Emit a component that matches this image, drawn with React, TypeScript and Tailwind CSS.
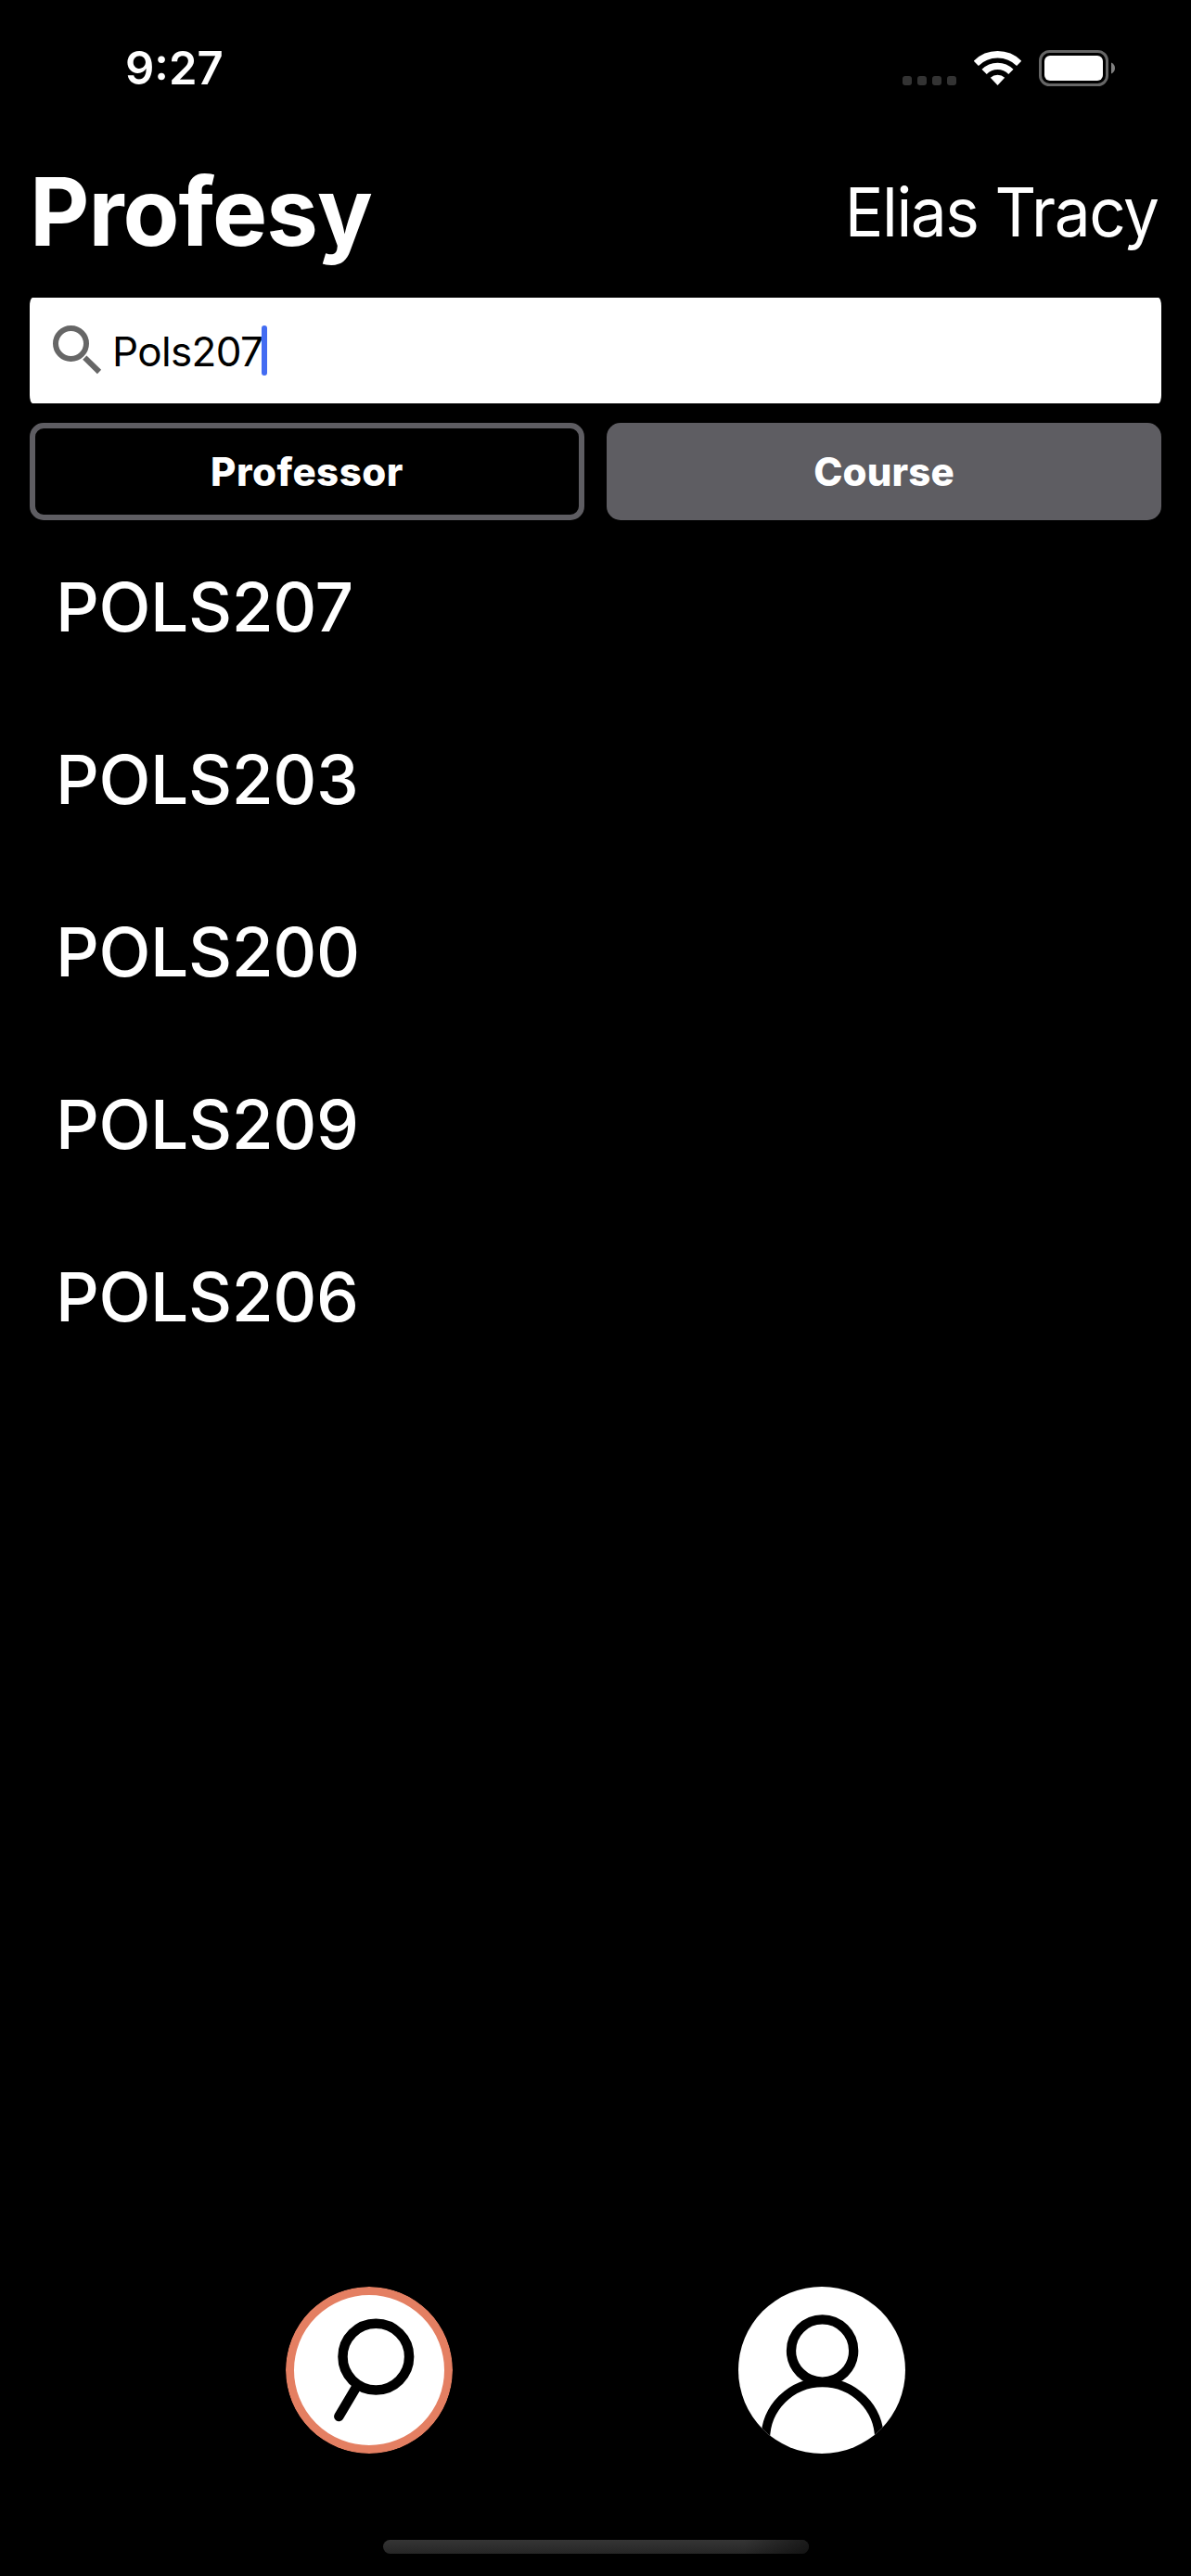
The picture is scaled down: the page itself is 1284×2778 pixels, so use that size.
const courses = ['POLS207', 'POLS203', 'POLS200', 'POLS209', 'POLS206']

function WifiIcon() {
  return (
    <svg className="h-[37px] w-[51px]" viewBox="0 0 51 37" fill="none">
      <path d="M2.3 13.4A32.8 32.8 0 0 1 48.7 13.4" stroke="white" strokeWidth="7.4" />
      <path d="M11.1 22.4A20.2 20.2 0 0 1 39.9 22.4" stroke="white" strokeWidth="7.4" />
      <path d="M25.5 37L17.8 28.8A11.4 11.4 0 0 1 33.2 28.8Z" fill="white" />
    </svg>
  )
}

function BatteryIcon() {
  return (
    <svg className="h-[39px] w-[82px]" viewBox="0 0 82 39" fill="none">
      <rect x="1.5" y="1.5" width="72" height="36" rx="10" stroke="#666666" strokeWidth="3" />
      <rect x="6" y="6" width="63" height="27" rx="6" fill="white" />
      <path d="M78 13.5C80.6 14.6 82 16.8 82 19.5S80.6 24.4 78 25.5Z" fill="#808080" />
    </svg>
  )
}

function StatusBar() {
  return (
    <div className="flex h-[146px] shrink-0 items-center justify-between pr-[82px] pl-[135px]">
      <span className="text-[49px] leading-none font-semibold">9:27</span>
      <div className="flex items-end gap-[19px]">
        <div className="mb-px flex gap-1.5">
          {[0, 1, 2, 3].map((dot) => (
            <span key={dot} className="size-[10px] rounded-[3px] bg-[#333333]" />
          ))}
        </div>
        <div className="mb-px flex">
          <WifiIcon />
        </div>
        <BatteryIcon />
      </div>
    </div>
  )
}

function SearchField() {
  return (
    <div className="flex h-[114px] items-center rounded-[3px/9px] bg-white pl-[25px] text-black">
      <svg className="mb-px h-[53px] w-[53px]" viewBox="0 0 53 53" fill="none" stroke="#666666" strokeWidth="6">
        <circle cx="19.5" cy="19.5" r="16.5" />
        <path d="M34.3 34.6L50 50" />
      </svg>
      <span className="mt-px ml-[11px] text-[44px] leading-none tracking-[-0.65px]">Pols207</span>
      <span className="-ml-px h-[54px] w-[6px] rounded-full bg-[#436cf2]" />
    </div>
  )
}

function SearchTab() {
  return (
    <button className="size-[180px] overflow-hidden rounded-full" aria-label="Search">
      <svg className="size-full" viewBox="0 0 180 180" fill="none">
        <circle cx="90" cy="90" r="85.5" fill="white" stroke="#e47f62" strokeWidth="9" />
        <circle cx="97.3" cy="75.6" r="35.8" stroke="black" strokeWidth="10.5" />
        <path d="M75.7 109L57.3 140" stroke="black" strokeWidth="10.5" strokeLinecap="round" />
      </svg>
    </button>
  )
}

function ProfileTab() {
  return (
    <button className="size-[180px] overflow-hidden rounded-full bg-white" aria-label="Profile">
      <svg className="size-full" viewBox="0 0 180 180" fill="none" stroke="black">
        <circle cx="90.6" cy="69" r="33.6" strokeWidth="10.3" />
        <circle cx="90.6" cy="164.7" r="61.4" strokeWidth="9.8" />
      </svg>
    </button>
  )
}

export default function App() {
  return (
    <div className="flex h-[2778px] w-[1284px] flex-col overflow-hidden bg-black font-['Inter',sans-serif] text-white">
      <StatusBar />
      <div className="flex flex-col px-8">
        <header className="mb-[11px] flex h-[164px] items-center justify-between">
          <h1 className="origin-left scale-x-[0.975] text-[102px] leading-none font-bold tracking-[-1px]">Profesy</h1>
          <span className="mt-px mr-[3px] origin-right scale-x-[0.95] text-[73px] leading-none tracking-[-1.5px]">Elias Tracy</span>
        </header>
        <SearchField />
        <div className="mt-[21px] grid h-[105px] grid-cols-2 gap-6 text-[42px] leading-none font-extrabold">
          <button className="rounded-[15px] border-[6px] border-[#5e5d62] tracking-[0.5px]">Professor</button>
          <button className="rounded-[15px] bg-[#5e5d62] tracking-[0.1px]">Course</button>
        </div>
      </div>
      <ul className="flex-1">
        {courses.map((course) => (
          <li key={course} className="flex h-[186px] items-center pt-px pl-[60px] text-[73px] leading-none font-medium tracking-[-0.4px]">
            {course}
          </li>
        ))}
      </ul>
      <nav className="mb-[93px] flex gap-[308px] pl-[308px]">
        <SearchTab />
        <ProfileTab />
      </nav>
      <div className="mb-6 ml-[413px] h-[15px] w-[459px] shrink-0 overflow-hidden rounded-full bg-linear-to-b from-[#353535] to-[#262626]">
        <div className="ml-auto h-full w-[70px] bg-linear-to-r from-black/0 to-black/50" />
      </div>
    </div>
  )
}
